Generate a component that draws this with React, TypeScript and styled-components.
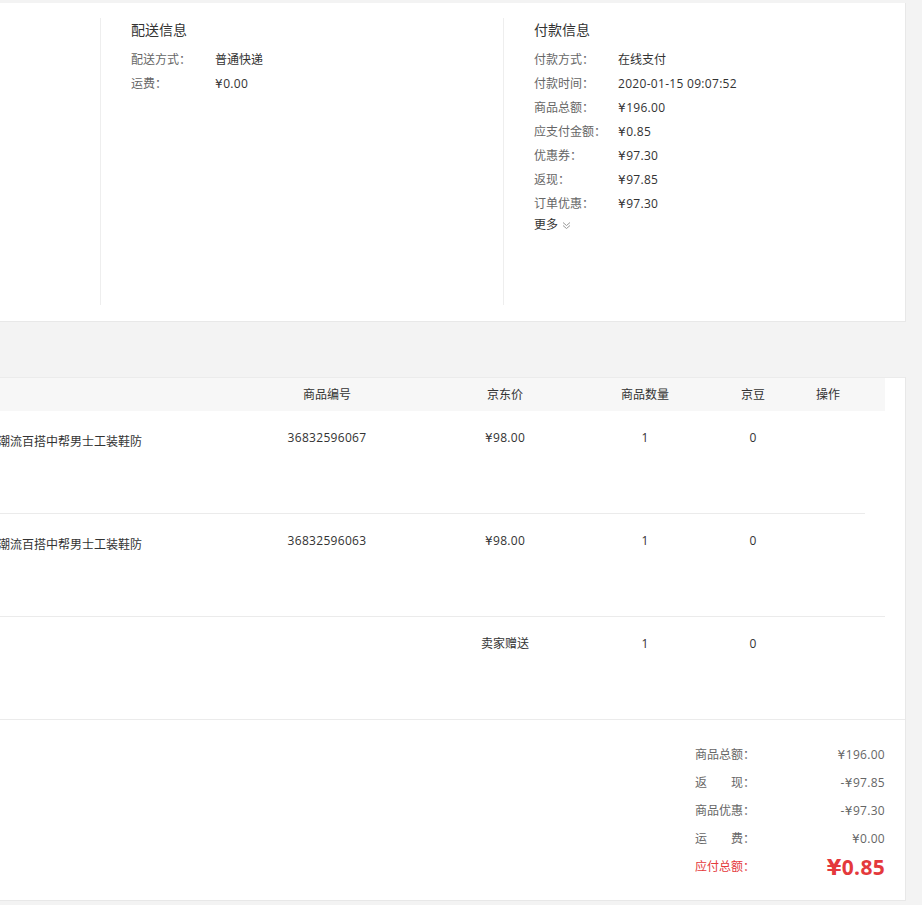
import * as React from 'react';
import styled, { createGlobalStyle } from 'styled-components';

const GlobalStyle = createGlobalStyle`
  html, body {
    margin: 0;
    padding: 0;
    background: #f3f3f3;
  }
  body {
    font-family: 'Open Sans', 'Noto Sans CJK SC', sans-serif;
    font-size: 12px;
    color: #333;
  }
`;

const Viewport = styled.div`
  width: 922px;
  height: 905px;
  overflow: hidden;
  background: #f3f3f3;
  padding-top: 3px;
  box-sizing: border-box;
`;

const Column = styled.div`
  width: 906px;
`;

const InfoPanel = styled.div`
  display: flex;
  align-items: flex-start;
  height: 319px;
  box-sizing: border-box;
  padding-top: 15px;
  background: #fff;
  border-right: 1px solid #e8e8e8;
  border-bottom: 1px solid #e8e8e8;
`;

const InfoSection = styled.div<{ $width: number; $pad?: number }>`
  width: ${p => p.$width}px;
  height: 287px;
  box-sizing: border-box;
  padding: 2px 0 0 ${p => p.$pad ?? 30}px;
  border-right: 1px solid #eee;
  &:last-child {
    border-right: none;
  }
`;

const InfoTitle = styled.h3`
  margin: 0 0 8px;
  font-size: 14px;
  font-weight: normal;
  line-height: 20px;
  color: #333;
`;

const InfoRow = styled.div`
  display: flex;
  line-height: 24px;
`;

const InfoLabel = styled.span`
  width: 84px;
  color: #666;
`;

const InfoValue = styled.span`
  color: #333;
`;

const MoreLink = styled.a`
  display: inline-flex;
  align-items: center;
  gap: 4px;
  line-height: 18px;
  color: #333;
  cursor: pointer;
  svg {
    display: block;
  }
`;

const TablePanel = styled.div`
  margin-top: 55px;
  background: #fff;
  border-top: 1px solid #ebebeb;
  border-right: 1px solid #e8e8e8;
  border-bottom: 1px solid #e8e8e8;
`;

const cols = '239px 176px 180px 100px 116px 34px 1fr';

const HeadRow = styled.div`
  display: grid;
  grid-template-columns: ${cols};
  height: 33px;
  line-height: 33px;
  margin-right: 20px;
  background: #f7f7f7;
  color: #333;
`;

const HeadCell = styled.div`
  text-align: center;
  white-space: nowrap;
`;

const ItemRow = styled.div<{ $inset: number }>`
  display: grid;
  grid-template-columns: ${cols};
  height: 103px;
  box-sizing: border-box;
  margin-right: ${p => p.$inset}px;
  border-bottom: 1px solid #ebebeb;
`;

const Cell = styled.div`
  padding-top: 18px;
  line-height: 18px;
  text-align: center;
  white-space: nowrap;
  color: #333;
`;

const NameCell = styled.div`
  padding-top: 22px;
  line-height: 18px;
  white-space: nowrap;
  color: #333;
  span {
    margin-left: -2px;
  }
`;

const Summary = styled.div`
  display: flex;
  justify-content: flex-end;
  padding: 21px 20px 18px 0;
`;

const SummaryList = styled.div`
  display: grid;
  grid-template-columns: auto 1fr;
  width: 190px;
  line-height: 28px;
`;

const SumLabel = styled.span<{ $red?: boolean }>`
  color: ${p => (p.$red ? '#e4393c' : '#666')};
  white-space: pre;
`;

const SumValue = styled.span<{ $big?: boolean }>`
  text-align: right;
  color: ${p => (p.$big ? '#e4393c' : '#666')};
  font-size: ${p => (p.$big ? '21px' : '12px')};
  font-weight: ${p => (p.$big ? 700 : 400)};
`;

const Digits = styled.span`
  letter-spacing: 0.3px;
`;

const Yen = styled.span`
  font-family: 'DejaVu Sans', sans-serif;
  letter-spacing: 0;
  margin-right: 0.5px;
`;

const Money = ({ text }: { text: string }) => {
  const at = text.indexOf('¥');
  if (at < 0) return <Digits>{text}</Digits>;
  return (
    <Digits>
      {text.slice(0, at)}
      <Yen>¥</Yen>
      {text.slice(at + 1)}
    </Digits>
  );
};

const DoubleDown = () => (
  <svg width="9" height="9" viewBox="0 0 9 9" fill="none" stroke="#999" strokeWidth="1">
    <path d="M1 1.5 L4.5 4.5 L8 1.5" />
    <path d="M1 4.5 L4.5 7.5 L8 4.5" />
  </svg>
);

const delivery = [
  ['配送方式：', '普通快递'],
  ['运费：', '¥0.00'],
];

const payment = [
  ['付款方式：', '在线支付'],
  ['付款时间：', '2020-01-15 09:07:52'],
  ['商品总额：', '¥196.00'],
  ['应支付金额：', '¥0.85'],
  ['优惠券：', '¥97.30'],
  ['返现：', '¥97.85'],
  ['订单优惠：', '¥97.30'],
];

const items = [
  { name: '潮流百搭中帮男士工装鞋防', sku: '36832596067', price: '¥98.00', qty: '1', beans: '0', inset: 40 },
  { name: '潮流百搭中帮男士工装鞋防', sku: '36832596063', price: '¥98.00', qty: '1', beans: '0', inset: 20 },
  { name: '', sku: '', price: '卖家赠送', qty: '1', beans: '0', inset: 0 },
];

const totals = [
  ['商品总额：', '¥196.00'],
  ['返　　现：', '-¥97.85'],
  ['商品优惠：', '-¥97.30'],
  ['运　　费：', '¥0.00'],
];

const isNumeric = (v: string) => /^[-¥0-9]/.test(v);

export default function App() {
  return (
    <Viewport>
      <GlobalStyle />
      <Column>
        <InfoPanel>
          <InfoSection $width={101} $pad={0} />
          <InfoSection $width={403}>
            <InfoTitle>配送信息</InfoTitle>
            {delivery.map(([l, v]) => (
              <InfoRow key={l}>
                <InfoLabel>{l}</InfoLabel>
                <InfoValue>{isNumeric(v) ? <Money text={v} /> : v}</InfoValue>
              </InfoRow>
            ))}
          </InfoSection>
          <InfoSection $width={400}>
            <InfoTitle>付款信息</InfoTitle>
            {payment.map(([l, v]) => (
              <InfoRow key={l}>
                <InfoLabel>{l}</InfoLabel>
                <InfoValue>{isNumeric(v) ? <Money text={v} /> : v}</InfoValue>
              </InfoRow>
            ))}
            <MoreLink>
              更多 <DoubleDown />
            </MoreLink>
          </InfoSection>
        </InfoPanel>

        <TablePanel>
          <HeadRow>
            <HeadCell />
            <HeadCell>商品编号</HeadCell>
            <HeadCell>京东价</HeadCell>
            <HeadCell>商品数量</HeadCell>
            <HeadCell>京豆</HeadCell>
            <HeadCell>操作</HeadCell>
            <HeadCell />
          </HeadRow>
          {items.map((it, i) => (
            <ItemRow key={i} $inset={it.inset}>
              <NameCell>
                <span>{it.name}</span>
              </NameCell>
              <Cell>
                <Money text={it.sku} />
              </Cell>
              <Cell>{isNumeric(it.price) ? <Money text={it.price} /> : it.price}</Cell>
              <Cell>{it.qty}</Cell>
              <Cell>{it.beans}</Cell>
              <Cell />
              <Cell />
            </ItemRow>
          ))}
          <Summary>
            <SummaryList>
              {totals.map(([l, v]) => (
                <React.Fragment key={l}>
                  <SumLabel>{l}</SumLabel>
                  <SumValue>
                    <Money text={v} />
                  </SumValue>
                </React.Fragment>
              ))}
              <SumLabel $red>应付总额：</SumLabel>
              <SumValue $big>
                <Money text="¥0.85" />
              </SumValue>
            </SummaryList>
          </Summary>
        </TablePanel>
      </Column>
    </Viewport>
  );
}
